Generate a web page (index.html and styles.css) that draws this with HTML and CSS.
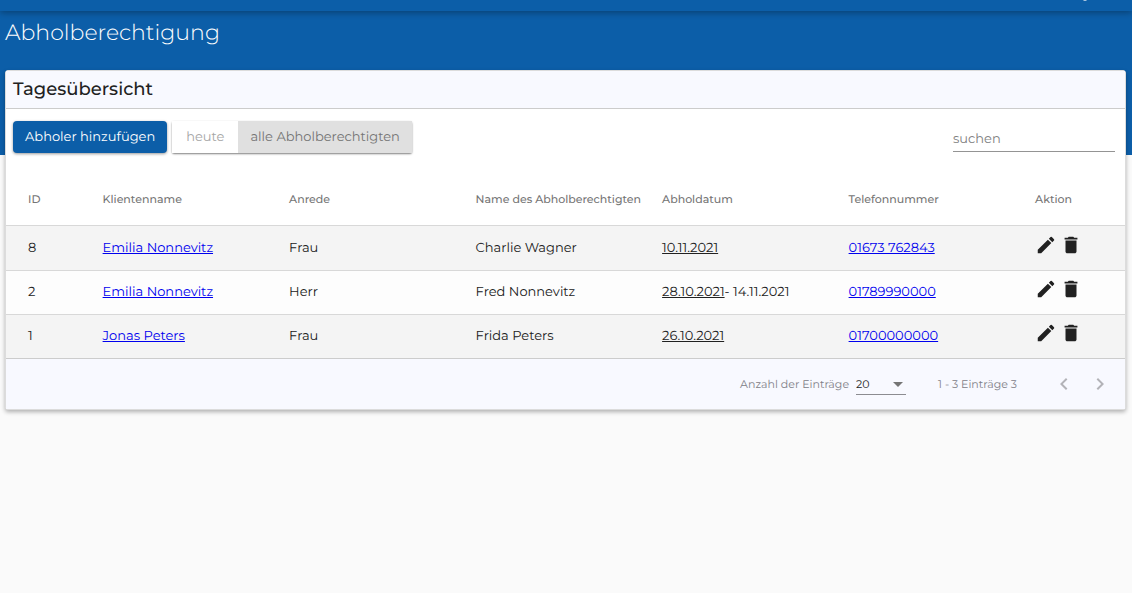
FILE: index.html
```html
<!DOCTYPE html>
<html lang="de">
<head>
<meta charset="utf-8">
<title>Abholberechtigung</title>
<link rel="stylesheet" href="styles.css">
</head>
<body>
<svg class="sprite" aria-hidden="true">
  <symbol id="edit" viewBox="0 0 24 24"><path d="M3 17.25V21h3.75L17.81 9.94l-3.75-3.75L3 17.25zM20.71 7.04a1 1 0 0 0 0-1.41l-2.34-2.34a1 1 0 0 0-1.41 0l-1.83 1.83 3.75 3.75 1.83-1.83z"/></symbol>
  <symbol id="delete" viewBox="0 0 24 24"><path d="M6 19c0 1.1.9 2 2 2h8c1.1 0 2-.9 2-2V7H6v12zM19 4h-3.500l-1-1h-5l-1 1H5v2h14V4z"/></symbol>
</svg>
<header class="topbar"><svg class="topbar-icon" viewBox="0 0 4 2" aria-hidden="true"><path d="M0 0h4L3 1H1z"/></svg></header>
<main class="page">
  <h1 class="page-title">Abholberechtigung</h1>
  <section class="card">
    <h2 class="card-title">Tagesübersicht</h2>
    <div class="toolbar">
      <button class="btn btn-primary" type="button">Abholer hinzufügen</button>
      <div class="toggle">
        <button class="btn btn-today" type="button">heute</button>
        <button class="btn btn-all" type="button">alle Abholberechtigten</button>
      </div>
      <input class="search" type="text" placeholder="suchen" aria-label="suchen">
    </div>
    <table class="table">
      <thead>
        <tr><th class="col-id">ID</th><th>Klientenname</th><th>Anrede</th><th>Name des Abholberechtigten</th><th>Abholdatum</th><th>Telefonnummer</th><th class="col-action">Aktion</th></tr>
      </thead>
      <tbody>
        <tr>
          <td>8</td><td><a href="#">Emilia Nonnevitz</a></td><td>Frau</td><td>Charlie Wagner</td><td><u>10.11.2021</u></td><td><a href="#">01673 762843</a></td>
          <td><div class="actions"><button class="icon-btn" type="button" aria-label="Bearbeiten"><svg><use href="#edit"/></svg></button><button class="icon-btn" type="button" aria-label="Löschen"><svg><use href="#delete"/></svg></button></div></td>
        </tr>
        <tr>
          <td>2</td><td><a href="#">Emilia Nonnevitz</a></td><td>Herr</td><td>Fred Nonnevitz</td><td><u>28.10.2021</u>- 14.11.2021</td><td><a href="#">01789990000</a></td>
          <td><div class="actions"><button class="icon-btn" type="button" aria-label="Bearbeiten"><svg><use href="#edit"/></svg></button><button class="icon-btn" type="button" aria-label="Löschen"><svg><use href="#delete"/></svg></button></div></td>
        </tr>
        <tr>
          <td>1</td><td><a href="#">Jonas Peters</a></td><td>Frau</td><td>Frida Peters</td><td><u>26.10.2021</u></td><td><a href="#">01700000000</a></td>
          <td><div class="actions"><button class="icon-btn" type="button" aria-label="Bearbeiten"><svg><use href="#edit"/></svg></button><button class="icon-btn" type="button" aria-label="Löschen"><svg><use href="#delete"/></svg></button></div></td>
        </tr>
      </tbody>
    </table>
    <div class="paginator">
      <label for="page-size">Anzahl der Einträge</label>
      <div class="select-wrap">
        <select id="page-size"><option>20</option></select>
        <svg class="caret" viewBox="0 0 10 5" aria-hidden="true"><path d="M0 0h10L5 5z"/></svg>
      </div>
      <span class="range">1 - 3 Einträge 3</span>
      <button class="page-btn" type="button" aria-label="Vorherige Seite" disabled><svg viewBox="0 0 24 24"><path d="M15.410 7.410 14 6l-6 6 6 6 1.410-1.410L10.830 12z"/></svg></button>
      <button class="page-btn" type="button" aria-label="Nächste Seite" disabled><svg viewBox="0 0 24 24"><path d="M10 6 8.590 7.410 13.170 12l-4.580 4.590L10 18l6-6z"/></svg></button>
    </div>
  </section>
</main>
</body>
</html>
```
FILE: styles.css
```css
* { box-sizing: border-box; }
body {
  margin: 0;
  font-family: Montserrat, Inter, "Open Sans", sans-serif;
  font-size: 13px;
  line-height: 20px;
  text-rendering: geometricPrecision;
  color: #212121;
  background: #fafafa linear-gradient(#0c5ea8, #0c5ea8) 0 0 / 100% 155px no-repeat;
}
button, input, select { font: inherit; text-rendering: inherit; }
button { border: 0; padding: 0; cursor: pointer; }
.sprite { display: none; }
.topbar {
  display: flex;
  justify-content: flex-end;
  height: 11px;
  padding-right: 45px;
  background: #0c5ea8;
  box-shadow: 0 2px 6px rgba(0, 0, 0, .3);
}
.topbar-icon { width: 4px; height: 2px; fill: #a4c2dd; }
.page { padding: 8px 6px 16px 5px; }
.page-title {
  margin: 0 0 23px;
  font-size: 22px;
  font-weight: 300;
  line-height: 28px;
  color: #fff;
}
.card {
  background: #fff;
  border: 1px solid #dcdcdc;
  border-radius: 3px;
  box-shadow: 0 2px 4px rgba(0, 0, 0, .3);
}
.card-title {
  margin: 0;
  padding: 0 7px;
  font-size: 18px;
  font-weight: 500;
  line-height: 37px;
  background: #f8f9ff;
  border-bottom: 1px solid #ccc;
}
.toolbar { display: flex; gap: 5px; padding: 12px 10px 19px 7px; }
.btn { height: 32px; padding: 0 12px 1px; white-space: nowrap; }
.btn-primary {
  color: #fff;
  background: #0c5ea8;
  border-radius: 4px;
  box-shadow: 0 1px 3px rgba(0, 0, 0, .4);
}
.toggle { display: flex; border-radius: 2px; box-shadow: 0 1px 2px rgba(0, 0, 0, .5); }
.btn-today { padding: 0 14px 1px; color: #a6a6a6; background: #fff; }
.btn-all { color: #757575; background: #e0e0e0; }
.search {
  width: 162px;
  height: 31px;
  margin-left: auto;
  padding: 5px 0 0;
  background: none;
  border: 0;
  border-bottom: 1px solid #949494;
  outline: 0;
}
.search::placeholder { color: #808080; opacity: 1; }
.table { width: 100%; table-layout: fixed; border-collapse: separate; border-spacing: 0; }
.table th, .table td {
  height: 44px;
  padding: 0 0 1px 22px;
  text-align: left;
  white-space: nowrap;
  border-bottom: 1px solid #d8d8d8;
}
.table th { height: 54px; padding-bottom: 0; font-size: 11px; font-weight: 500; color: #757575; }
.table tbody tr { background: #fdfdfd; }
.table tbody tr:nth-child(odd) { background: #f4f4f4; }
.table tbody tr:first-child td { height: 45px; }
.table tbody tr:last-child td { border-bottom-color: #ccc; }
.col-id { width: 6.667%; }
.col-action { width: 10%; }
.table a { color: #00e; text-decoration: underline; }
.actions { display: flex; gap: 3px; padding-bottom: 6px; }
.icon-btn { display: flex; background: none; }
.icon-btn svg { width: 22px; height: 22px; fill: #212121; }
.paginator {
  display: flex;
  align-items: center;
  justify-content: flex-end;
  height: 50px;
  padding-right: 13px;
  font-size: 11px;
  color: #808087;
  background: #f8f9ff;
}
.select-wrap { position: relative; width: 50px; margin: 0 32px 0 7px; }
.select-wrap select {
  display: block;
  width: 100%;
  height: 21px;
  padding: 0;
  color: #212121;
  background: none;
  border: 0;
  border-bottom: 1px solid #8c8c91;
  border-radius: 0;
  appearance: none;
}
.caret { position: absolute; right: 3px; top: 8px; width: 10px; height: 5px; fill: #757575; pointer-events: none; }
.range { margin-right: 35px; }
.page-btn { display: flex; background: none; }
.page-btn + .page-btn { margin-left: 12px; }
.page-btn svg { width: 24px; height: 24px; fill: #b3b3b8; }
```
